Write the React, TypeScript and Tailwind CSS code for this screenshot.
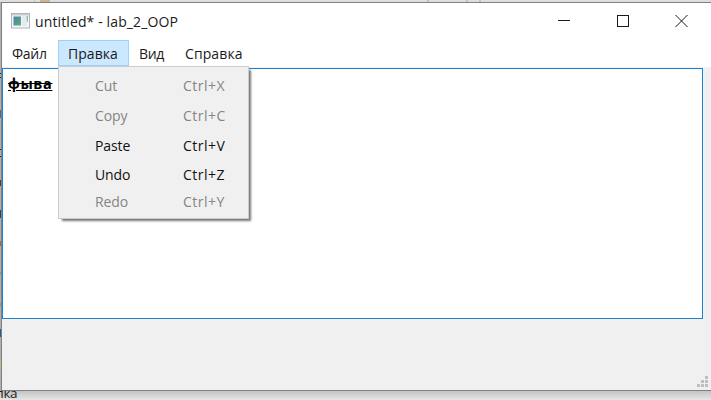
import React from 'react';

type MenuItem = { label: string; keys: string; enabled: boolean; row: string };

const items: MenuItem[] = [
  { label: 'Cut', keys: 'Ctrl+X', enabled: false, row: 'h-[30px]' },
  { label: 'Copy', keys: 'Ctrl+C', enabled: false, row: 'h-[30px]' },
  { label: 'Paste', keys: 'Ctrl+V', enabled: true, row: 'h-[30px]' },
  { label: 'Undo', keys: 'Ctrl+Z', enabled: true, row: 'h-[28px]' },
  { label: 'Redo', keys: 'Ctrl+Y', enabled: false, row: 'h-[27px]' },
];

function AppIcon() {
  return (
    <svg width="19" height="16" viewBox="0 0 19 16" className="mt-[-2px] shrink-0">
      <defs>
        <linearGradient id="pane" x1="0" y1="0" x2="1" y2="1">
          <stop offset="0" stopColor="#4a7fa5" />
          <stop offset="1" stopColor="#58b27c" />
        </linearGradient>
      </defs>
      <rect x="0.5" y="0.5" width="18" height="14.5" fill="#f4f6f7" stroke="#adb4ba" />
      <rect x="1" y="1" width="17" height="1.5" fill="#c8ced4" />
      <rect x="2.5" y="3.5" width="7.5" height="9" fill="url(#pane)" />
      <rect x="11" y="3" width="5" height="10" fill="#e6eaf0" />
      <path d="M15.5 3H17V9H16Z" fill="#7cc69b" />
    </svg>
  );
}

function WindowButtons() {
  return (
    <div className="ml-auto flex h-full items-center text-[#1a1a1a]">
      <svg width="58" height="37" shapeRendering="crispEdges"><path d="M21 17.5H33" stroke="currentColor" /></svg>
      <svg width="59" height="37" shapeRendering="crispEdges"><rect x="22.5" y="12.5" width="11" height="11" fill="none" stroke="currentColor" /></svg>
      <svg width="57" height="37"><path d="M21.5 12L33.5 24M33.5 12L21.5 24" stroke="currentColor" strokeWidth="1" /></svg>
    </div>
  );
}

function SizeGrip() {
  return (
    <svg width="12" height="12" className="mr-[2px] mb-[2px]" fill="#bfbfbf" shapeRendering="crispEdges">
      {[[8, 0], [4, 4], [8, 4], [0, 8], [4, 8], [8, 8]].map(([x, y]) => (
        <rect key={`${x}-${y}`} x={x} y={y} width="3" height="3" />
      ))}
    </svg>
  );
}

function EditMenu() {
  return (
    <div className="absolute left-[-1px] top-[25px] z-10 h-[153px] w-[191px] border border-[#cccccc] bg-[#f0f0f0] pt-[3px] text-[14px] shadow-[3px_3px_2px_-1px_#777777]">
      {items.map((item) => (
        <div key={item.label} className={`flex items-center pl-[36px] ${item.row} ${item.enabled ? 'text-[#111111]' : 'text-[#858585]'}`}>
          <span className="w-[88px] tracking-[-0.1px]">{item.label}</span>
          <span className="tracking-[0.5px]">{item.keys}</span>
        </div>
      ))}
    </div>
  );
}

export default function App() {
  return (
    <div className="flex h-[400px] w-[711px] flex-col overflow-hidden bg-[#dedede] font-['Open_Sans','Noto_Sans',sans-serif] text-[14px] tracking-[-0.3px] text-[#1a1a1a]">
      <div className="flex h-[2px] shrink-0">
        <div className="ml-[34px] h-full w-px bg-[#c5c5c5]" />
        <div className="ml-[5px] h-full w-[10px] bg-[#cbb78a]" />
        <div className="ml-[377px] h-full w-[2px] bg-[#c2c2c2]" />
        <div className="ml-[37px] h-full w-[2px] bg-[#c2c2c2]" />
        <div className="ml-[11px] h-full w-[2px] bg-[#c2c2c2]" />
      </div>
      <div className="flex h-[389px] shrink-0">
        <div className="flex w-px shrink-0 flex-col bg-[#b0b0b0]">
          <div className="mt-[71px] h-px bg-[#222222]" />
          <div className="mt-[3px] h-px bg-[#222222]" />
          <div className="mt-[32px] h-[8px] bg-[#476c91]" />
          <div className="mt-[31px] h-px bg-[#222222]" />
          <div className="mt-[6px] h-px bg-[#222222]" />
          <div className="mt-[23px] h-[6px] bg-[#4a3e3a]" />
          <div className="mt-[24px] h-[8px] bg-[#244366]" />
          <div className="mt-[23px] h-[5px] bg-[#a06a48]" />
          <div className="mt-[26px] h-[3px] bg-[#69a6c4]" />
          <div className="mt-[28px] h-[3px] bg-[#69a6c4]" />
          <div className="mt-[23px] h-[8px] bg-[#2d5b86]" />
          <div className="mt-[23px] h-[10px] bg-[#c8b290]" />
        </div>
        <div className="flex w-[710px] flex-col border-y border-l border-[#818181] bg-[#f0f0f0]">
          <div className="flex h-[37px] shrink-0 items-center bg-white pl-[9px]">
            <AppIcon />
            <span className="ml-[5px] text-[14px] tracking-[0.12px]">untitled* - lab_2_OOP</span>
            <WindowButtons />
          </div>
          <div className="flex h-[27px] shrink-0 bg-white">
            <div className="flex h-[27px] w-[56px] items-center pl-[10px]">Файл</div>
            <div className="relative flex h-[26px] w-[71px] items-center border border-[#99d1ff] bg-[#cce8ff] pl-[9px]">
              <span className="pt-px tracking-[0.05px]">Правка</span>
              <EditMenu />
            </div>
            <div className="flex h-[27px] w-[46px] items-center pl-[10px]">Вид</div>
            <div className="flex h-[27px] items-center pl-[10px] tracking-[0.1px]">Справка</div>
          </div>
          <div className="mt-px h-[251px] w-[701px] shrink-0 border border-[#1883d7] bg-white pl-[5px] pt-[6px]">
            <div className="w-max text-[14.5px] font-bold leading-[18px] tracking-[0.6px] text-black [text-decoration-line:underline_line-through]">фыва</div>
          </div>
          <div className="flex flex-1 items-end justify-end">
            <SizeGrip />
          </div>
        </div>
      </div>
      <div className="h-[9px] bg-gradient-to-b from-[#c4c4c4] to-[#e6e6e6] leading-[4px]">
        <span className="ml-[-4px] text-[13.5px]">лка</span>
      </div>
    </div>
  );
}
